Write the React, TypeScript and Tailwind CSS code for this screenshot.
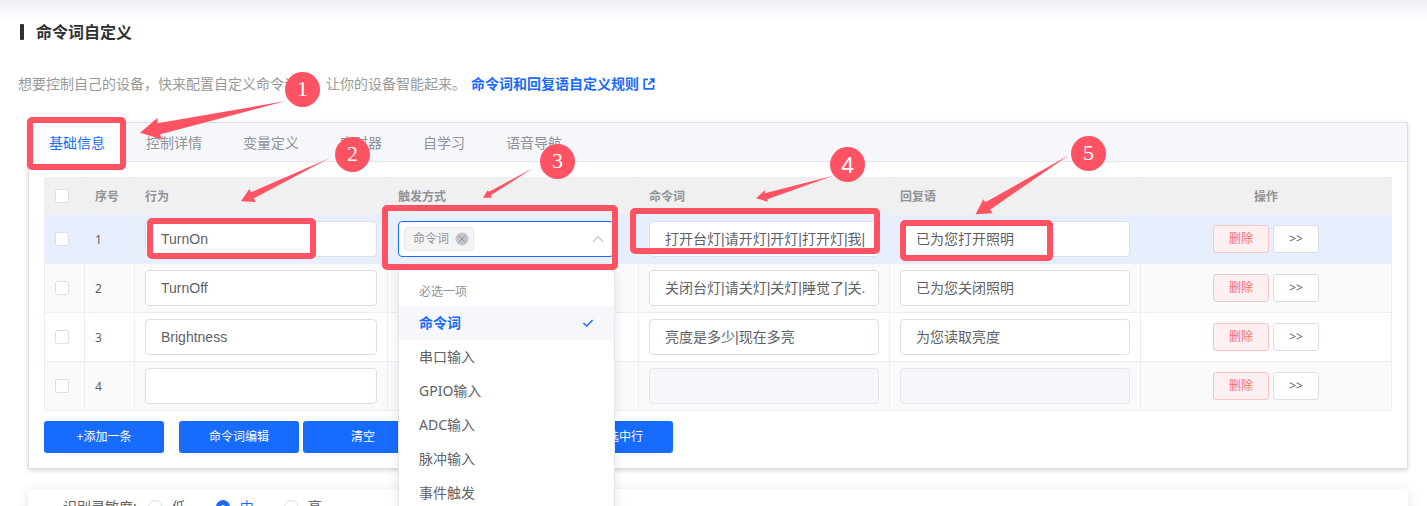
import React from "react";

type Row = {
  id: number;
  action: string;
  words: string;
  reply: string;
  disabled?: boolean;
};

const rows: Row[] = [
  { id: 1, action: "TurnOn", words: "打开台灯|请开灯|开灯|打开灯|我|", reply: "已为您打开照明" },
  { id: 2, action: "TurnOff", words: "关闭台灯|请关灯|关灯|睡觉了|关.", reply: "已为您关闭照明" },
  { id: 3, action: "Brightness", words: "亮度是多少|现在多亮", reply: "为您读取亮度" },
  { id: 4, action: "", words: "", reply: "", disabled: true },
];

const tabs = ["基础信息", "控制详情", "变量定义", "定时器", "自学习", "语音导航"];
const options = ["命令词", "串口输入", "GPIO输入", "ADC输入", "脉冲输入", "事件触发"];

const field =
  "block h-9 w-full min-w-0 rounded border border-[#dcdfe6] bg-white pr-[13px] pl-[15px] font-['Liberation_Sans','Noto_Sans_CJK_SC',sans-serif] text-sm text-[#606266] outline-none disabled:border-[#e4e7ed] disabled:bg-[#f5f7fa]";
const chineseField = `${field} pb-0.5`;
const cell = "border-r border-b border-[#ebeef5] px-2.5";
const textCell = `${cell} pt-0.5`;
const checkbox =
  "block size-3.5 appearance-none rounded-xs border border-[#dcdfe6] bg-white checked:bg-[#1a6bff]";
const primary =
  "h-8 min-w-[120px] rounded-[3px] bg-[#176bff] px-4 text-xs text-white";

function TriggerSelect({ row }: { row: Row }) {
  const open = row.id === 1;
  return (
    <div className="relative w-[216px]">
      <button
        type="button"
        role="combobox"
        aria-expanded={open}
        aria-controls="trigger-options"
        aria-label={`触发方式 ${row.id}`}
        className={`flex h-9 w-full items-center justify-between rounded border bg-white pr-2 pl-[5px] ${
          open ? "border-[#1a6bff]" : "border-[#dcdfe6]"
        }`}
      >
        {open && (
          <>
            <span className="flex h-6 items-center gap-1.5 rounded border border-[#e9e9eb] bg-[#f4f4f5] pr-1 pl-2 text-xs text-[#909399]">
              命令词
              <svg viewBox="0 0 14 14" className="size-3.5" aria-hidden="true">
                <circle cx="7" cy="7" r="6.5" fill="#c0c4cc" />
                <path d="M4.2 4.2l5.6 5.6M9.8 4.2l-5.6 5.6" stroke="#909399" strokeWidth="1" />
              </svg>
            </span>
            <svg viewBox="0 0 14 14" className="size-3.5" fill="none" aria-hidden="true">
              <path d="M1.8 9.8L7 4.4l5.2 5.4" stroke="#c0c4cc" strokeWidth="1.2" />
            </svg>
          </>
        )}
      </button>
      {open && (
        <div
          id="trigger-options"
          role="listbox"
          aria-label="触发方式"
          className="absolute top-12 left-0 z-10 w-[217px] rounded border border-[#e4e7ed] bg-white pt-1.5 pb-6 text-sm text-[#606266] shadow-[0_2px_12px_0_rgba(0,0,0,0.1)]"
        >
          <div className="h-[30px] px-5 pt-px text-xs leading-[30px] text-[#909399]">必选一项</div>
          {options.map((name, i) => (
            <div
              key={name}
              role="option"
              aria-selected={i === 0}
              className={`flex h-[34px] items-center justify-between px-5 ${
                i === 0 ? "bg-[#f5f7fa] font-bold text-[#1a6bff]" : ""
              }`}
            >
              {name}
              {i === 0 && (
                <svg viewBox="0 0 12 12" className="size-3" fill="none" aria-hidden="true">
                  <path d="M1.4 6l3.2 3 6-6" stroke="#1a6bff" strokeWidth="1.5" />
                </svg>
              )}
            </div>
          ))}
        </div>
      )}
    </div>
  );
}

function Annotations() {
  const box = "absolute rounded-[5px] border-6 border-[#ff5263]";
  const dot =
    "absolute flex size-[35px] items-center justify-center rounded-full bg-[#ff5263] pb-0.5 text-[22px] leading-none text-white";
  const serif = "font-['Liberation_Serif',serif]";
  return (
    <div className="pointer-events-none absolute inset-0 z-20 overflow-hidden">
      <svg className="absolute top-0 left-0 h-[506px] w-[1427px]" fill="#ff5263" aria-hidden="true">
        <path d="M140 132.7L157.3 118l.4 5.3L285.7 101 160.3 134.3l1 5z" />
        <path d="M241 201.3L249.3 189l1.7 3.3L329.3 158.3 253.7 198.3l2 3.7z" />
        <path d="M483 197.7l4.7-7.4 1.3 1.4L532.7 168.3 490.7 195.3l1.3 2.4z" />
        <path d="M756 198.3l9-8.3-.3 3.3L833.3 175.7 767.3 199.3l.4 2.4z" />
        <path d="M975.6 214.3l7.7-15 2.1 3L1068.8 155.3 990 209.7l2.7 3.6z" />
      </svg>
      <div className={`${box} top-[117px] left-[27px] h-[53px] w-[99px]`} />
      <div className={`${box} top-[218px] left-[147px] h-[41px] w-[169px]`} />
      <div className={`${box} top-[205px] left-[382px] h-[65px] w-[236px]`} />
      <div className={`${box} top-[208px] left-[630px] h-[46px] w-[250px]`} />
      <div className={`${box} top-[220px] left-[900px] h-[41px] w-[153px]`} />
      <span className={`${dot} ${serif} top-[72px] left-[285px]`}>1</span>
      <span className={`${dot} ${serif} top-[137px] left-[335px]`}>2</span>
      <span className={`${dot} ${serif} top-[144px] left-[540px]`}>3</span>
      <span className={`${dot} top-[147px] left-[830px] font-['Noto_Sans',sans-serif]`}>4</span>
      <span className={`${dot} ${serif} top-[136px] left-[1071px]`}>5</span>
    </div>
  );
}

export default function App() {
  return (
    <div className="relative h-screen overflow-hidden bg-white font-['Noto_Sans','Noto_Sans_CJK_SC',sans-serif] text-[#606266]">
      <main className="bg-linear-to-b from-[#eef1f8] to-white to-[22px] pt-5">
        <h1 className="flex h-6 items-center gap-3 px-5 text-base font-bold text-[#303133]">
          <span className="h-4 w-1 rounded-[1px] bg-[#303133]" />
          命令词自定义
        </h1>
        <p className="mt-[30px] flex h-5 items-center px-[18px] text-sm text-[#999999]">
          想要控制自己的设备，快来配置自定义命令词吧，让你的设备智能起来。
          <a href="#rules" className="ml-[5px] flex items-center gap-1 font-bold text-[#1a6bff]">
            命令词和回复语自定义规则
            <svg viewBox="0 0 12 12" className="size-3" fill="none" stroke="#1a6bff" strokeWidth="1.7" aria-hidden="true">
              <path d="M5 1.4H1.2v9.4h9.4V7M7.2 1.2h3.6v3.6M10.6 1.4L5.4 6.6" />
            </svg>
          </a>
        </p>

        <section className="mt-7 mr-[19px] ml-7 border border-[#dcdfe6] bg-white shadow-[0_2px_4px_0_rgba(0,0,0,0.12),0_0_6px_0_rgba(0,0,0,0.04)]">
          <div role="tablist" className="flex h-[39px] border-b border-[#e4e7ed] bg-[#f5f7fb]">
            {tabs.map((tab, i) => (
              <button
                key={tab}
                type="button"
                role="tab"
                aria-selected={i === 0}
                className={`h-[39px] border-r px-5 text-sm ${
                  i === 0
                    ? "border-[#dcdfe6] bg-white text-[#1a6bff]"
                    : "border-transparent text-[#909399]"
                }`}
              >
                {tab}
              </button>
            ))}
          </div>

          <div className="p-[15px]">
            <table className="w-full table-fixed border-separate border-spacing-0 border-t border-l border-[#ebeef5] text-left text-xs">
              <colgroup>
                <col className="w-10" />
                <col className="w-[50px]" />
                <col className="w-[253px]" />
                <col />
                <col />
                <col />
                <col />
              </colgroup>
              <thead className="bg-[#f0f0f0] text-[#909399]">
                <tr className="h-[37px]">
                  <th className={cell}>
                    <input type="checkbox" aria-label="全选" className={checkbox} />
                  </th>
                  <th className={textCell}>序号</th>
                  <th className={textCell}>行为</th>
                  <th className={textCell}>触发方式</th>
                  <th className={textCell}>命令词</th>
                  <th className={textCell}>回复语</th>
                  <th className={`${textCell} text-center`}>操作</th>
                </tr>
              </thead>
              <tbody>
                {rows.map((row) => (
                  <tr
                    key={row.id}
                    className={`h-[49px] ${
                      row.id === 1 ? "bg-[#e7eefe]" : row.id % 2 === 0 ? "bg-[#fafafa]" : "bg-white"
                    }`}
                  >
                    <td className={cell}>
                      <input type="checkbox" aria-label={`选择 ${row.id}`} className={checkbox} />
                    </td>
                    <td className={textCell}>{row.id}</td>
                    <td className={cell}>
                      <input aria-label={`行为 ${row.id}`} defaultValue={row.action} className={field} />
                    </td>
                    <td className={cell}>
                      <TriggerSelect row={row} />
                    </td>
                    <td className={cell}>
                      <input
                        aria-label={`命令词 ${row.id}`}
                        defaultValue={row.words}
                        disabled={row.disabled}
                        className={chineseField}
                      />
                    </td>
                    <td className={cell}>
                      <input
                        aria-label={`回复语 ${row.id}`}
                        defaultValue={row.reply}
                        disabled={row.disabled}
                        className={chineseField}
                      />
                    </td>
                    <td className={cell}>
                      <div className="flex justify-center gap-1">
                        <button
                          type="button"
                          className="h-7 w-14 rounded-[3px] border border-[#fbc4c4] bg-[#fef0f0] text-[#f56c6c]"
                        >
                          删除
                        </button>
                        <button
                          type="button"
                          className="h-7 w-[46px] rounded-[3px] border border-[#dcdfe6] bg-white"
                        >
                          &gt;&gt;
                        </button>
                      </div>
                    </td>
                  </tr>
                ))}
              </tbody>
            </table>

            <div className="mt-2.5 flex gap-1">
              <button type="button" className={`${primary} mr-[11px]`}>+添加一条</button>
              <button type="button" className={primary}>命令词编辑</button>
              <button type="button" className={primary}>清空</button>
              <button type="button" className={`${primary} w-[122px]`}>复制</button>
              <button type="button" className={primary}>删除选中行</button>
            </div>
          </div>
        </section>

        <section className="mt-5 mr-[19px] ml-7 bg-white px-[35px] pt-2 pb-5 shadow-[0_2px_12px_0_rgba(0,0,0,0.1)]">
          <fieldset className="flex h-5 items-center text-sm">
            <legend className="float-left mr-[11px] h-5">识别灵敏度:</legend>
            {["低", "中", "高"].map((level) => (
              <label
                key={level}
                className="mr-[30px] flex items-center gap-2.5 has-checked:text-[#1a6bff]"
              >
                <input
                  type="radio"
                  name="sensitivity"
                  defaultChecked={level === "中"}
                  className="size-3.5 appearance-none rounded-full border border-[#dcdfe6] bg-white checked:border-5 checked:border-[#1a6bff]"
                />
                {level}
              </label>
            ))}
          </fieldset>
        </section>
      </main>
      <Annotations />
    </div>
  );
}
